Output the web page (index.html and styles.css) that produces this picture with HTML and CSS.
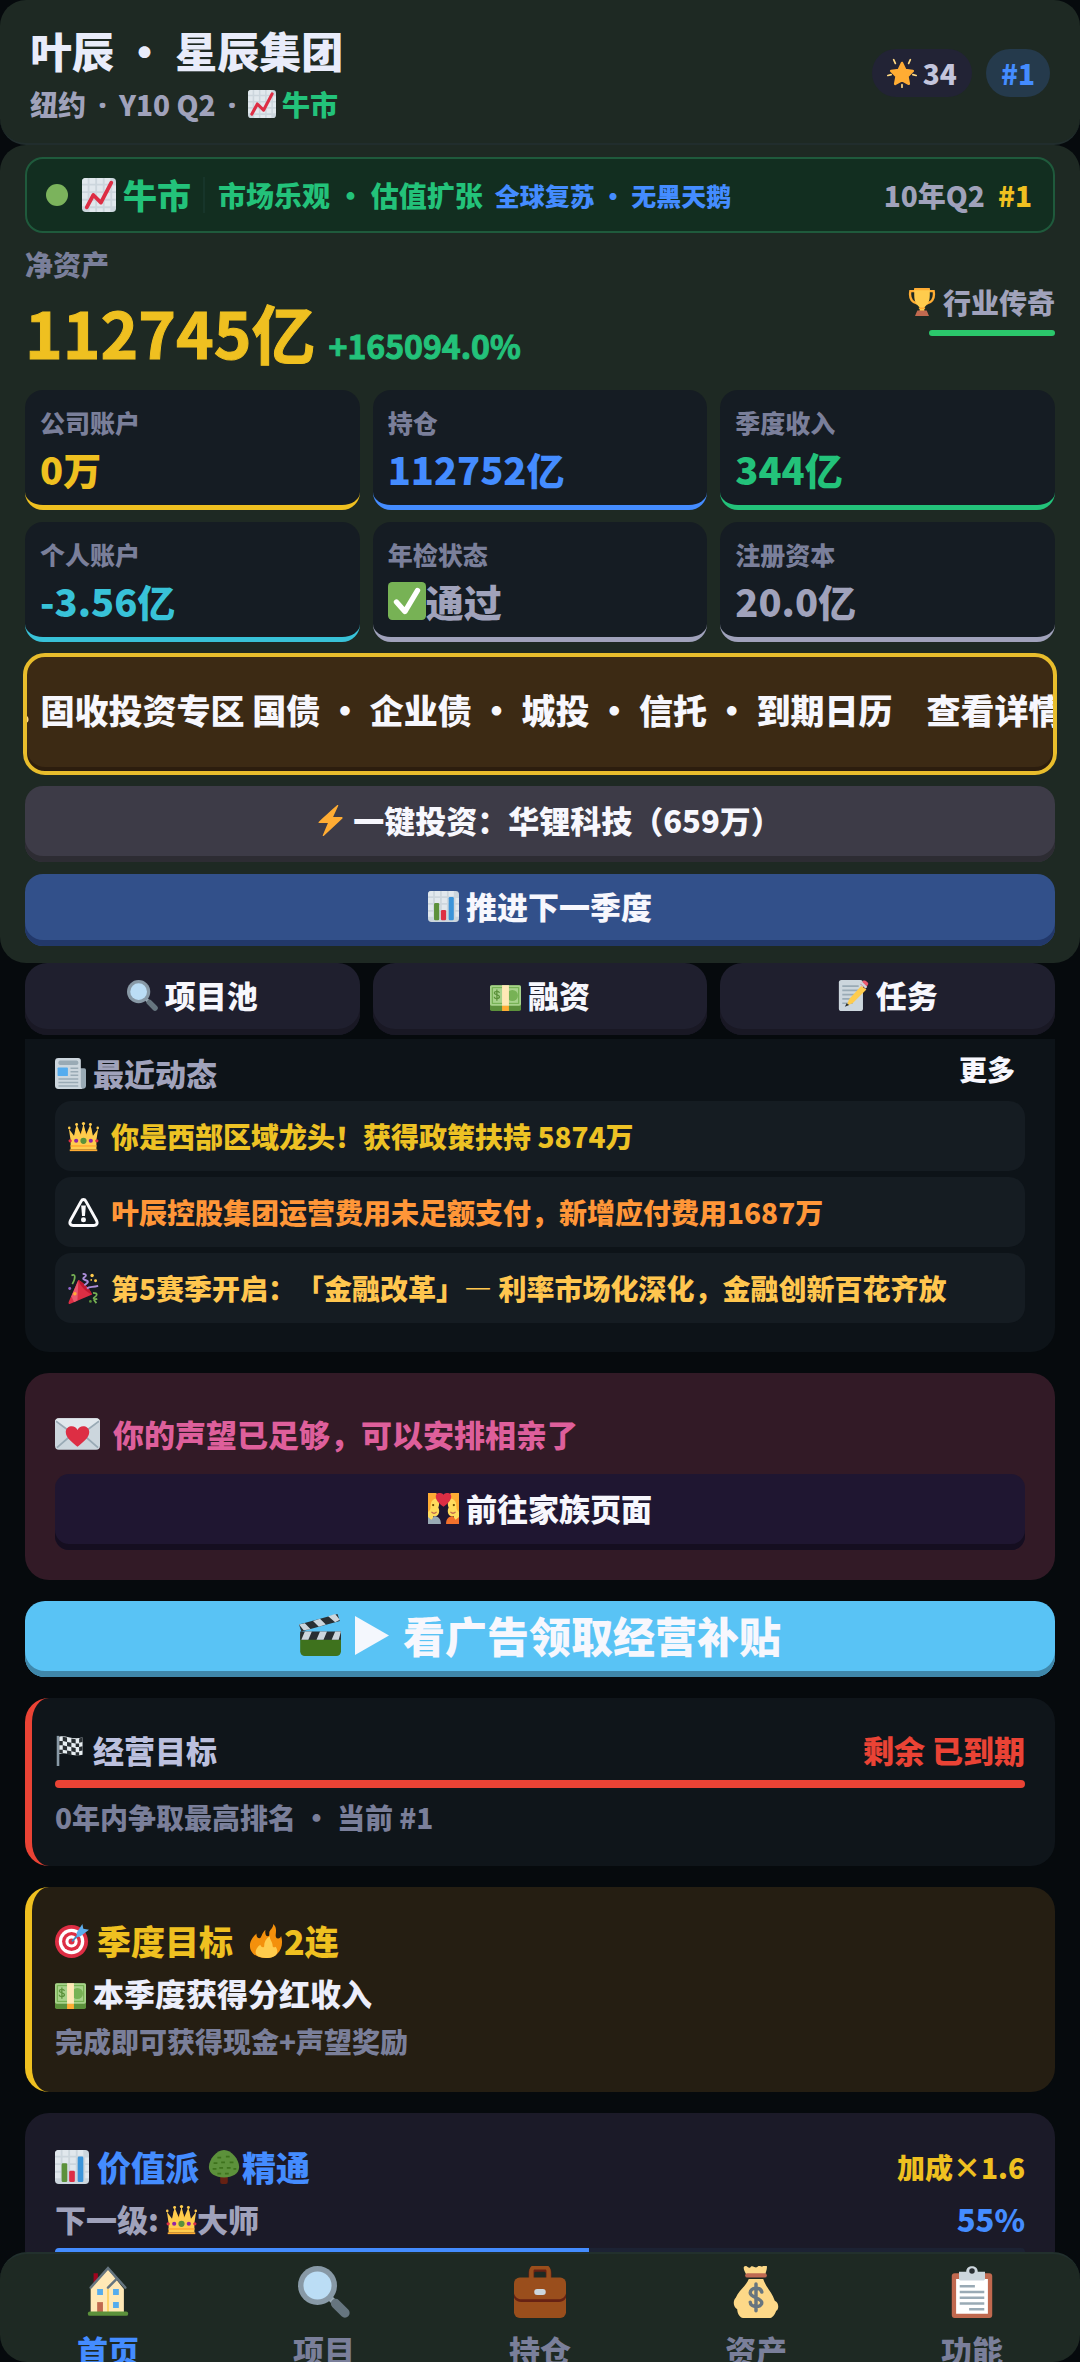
FILE: index.html
```html
<!DOCTYPE html>
<html lang="zh-CN">
<head>
<meta charset="utf-8">
<meta name="viewport" content="width=device-width, initial-scale=1">
<title>叶辰 • 星辰集团</title>
<link rel="stylesheet" href="styles.css">
</head>
<body>
<svg class="sprite" aria-hidden="true">
  <symbol id="i-rise" viewBox="0 0 36 36">
    <rect width="36" height="36" rx="4" fill="#ccd6dd"/>
    <g fill="#e1e8ed"><path d="M0 4a4 4 0 0 1 4-4h2v6H0zM8 0h6v6H8zM16 0h6v6h-6zM24 0h6v6h-6zM0 8h6v6H0zM8 8h6v6H8zM16 8h6v6h-6zM24 8h6v6h-6zM32 8h4v6h-4zM0 16h6v6H0zM8 16h6v6H8zM16 16h6v6h-6zM24 16h6v6h-6zM32 16h4v6h-4zM0 24h6v6H0zM8 24h6v6H8zM16 24h6v6h-6zM24 24h6v6h-6zM32 24h4v6h-4zM8 32h6v4H8zM16 32h6v4h-6zM24 32h6v4h-6z"/></g>
    <path d="M5 31l7-13 8 8L31 5" fill="none" stroke="#dd2e44" stroke-width="4" stroke-linecap="round" stroke-linejoin="round"/>
  </symbol>
  <symbol id="i-bars" viewBox="0 0 36 36">
    <rect width="36" height="36" rx="4" fill="#ccd6dd"/>
    <path fill="#e1e8ed" d="M0 4a4 4 0 0 1 4-4h2v6H0zM8 0h6v6H8zM16 0h6v6h-6zM24 0h6v6h-6zM0 8h6v6H0zM8 8h6v6H8zM16 8h6v6h-6zM24 8h6v6h-6zM32 8h4v6h-4zM0 16h6v6H0zM8 16h6v6H8zM16 16h6v6h-6zM32 16h4v6h-4zM0 24h6v6H0zM32 24h4v6h-4z"/>
    <rect x="7" y="14" width="6" height="20" rx="1.5" fill="#5c913b"/>
    <rect x="15" y="22" width="6" height="12" rx="1.5" fill="#dd2e44"/>
    <rect x="24" y="7" width="6" height="27" rx="1.5" fill="#3b94d9"/>
  </symbol>
  <symbol id="i-star" viewBox="0 0 36 36">
    <path fill="#ffac33" stroke="#ffac33" stroke-width="3" stroke-linejoin="round" d="M18 6l4 8.500 9 1-6.500 6.500 1.700 9L18 26.500 9.800 31l1.700-9L5 15.500l9-1z"/>
    <path d="M8 2l2 4.500M28 2l-2 4.500M1 21l4-1M35 21l-4-1M18 32v3" stroke="#ffd983" stroke-width="2" stroke-linecap="round"/>
  </symbol>
  <symbol id="i-trophy" viewBox="0 0 36 36">
    <path fill="none" stroke="#ffac33" stroke-width="3" d="M9 4H3c-1 6 0 14 9 16M27 4h6c1 6 0 14-9 16"/>
    <path fill="#ffcc4d" d="M8 1h20v8c0 10-4 13-7 16v5h-6v-5C12 22 8 19 8 9z"/>
    <path fill="#ffac33" d="M8 0h20v3H8zM14 25h8v2h-8z"/>
    <path fill="#c1694f" d="M12 29h12l3 7H9z"/>
  </symbol>
  <symbol id="i-check" viewBox="0 0 36 36">
    <rect width="36" height="36" rx="4" fill="#77b255"/>
    <path d="M8 19l8 9L28 8" fill="none" stroke="#fff" stroke-width="5" stroke-linecap="round" stroke-linejoin="round"/>
  </symbol>
  <symbol id="i-bag" viewBox="0 0 36 36">
    <path fill="#fdd888" d="M13 9h10c2 6 6 9 8 15 3 1 3 6 1 7-1 3-3 5-4 5H9c-2 0-4-3-4-6-3-2-3-6-1-8 2-5 7-8 9-13z"/>
    <path fill="#fdd888" d="M12 7c-2-3-4-7-1-7 1 0 2 2 3 1 1-2 3 0 4 0s2-2 3-1 2 0 3-1c3 0 1 5 0 8z"/>
    <path fill="#bf6952" d="M12 5h12a1.500 1.500 0 0 1 0 3H12a1.500 1.500 0 0 1 0-3z"/>
    <path fill="none" stroke="#67757f" stroke-width="2.400" stroke-linecap="round" d="M22 18c-1-4-8-3-8 .5s8 3.500 8 7-8 3.500-8-.5M18 12.500v18.500"/>
  </symbol>
  <symbol id="i-bolt" viewBox="0 0 36 36">
    <path fill="#ffac33" d="M32 15c0-.4-.3-1-1-1H21L27 1c.3-1-.6-1.400-1.400-.7C18 7 10 14 4.500 19.400c-.8.800-.5 1.600.5 1.600h10L9 35c-.3.900.6 1.300 1.400.7L31.500 16c.3-.3.500-.6.500-1z"/>
  </symbol>
  <symbol id="i-lens" viewBox="0 0 36 36">
    <path d="M22 22l4 4" stroke="#9aaab4" stroke-width="4"/>
    <path d="M26 26l6.500 6.500" stroke="#66757f" stroke-width="6.500" stroke-linecap="round"/>
    <circle cx="13.500" cy="13.500" r="13.500" fill="#8899a6"/>
    <circle cx="13.500" cy="13.500" r="9.700" fill="#bbddf5"/>
  </symbol>
  <symbol id="i-cash" viewBox="0 0 36 36">
    <rect y="6" width="36" height="30" rx="2" fill="#5c913b"/>
    <rect y="6" width="36" height="24" rx="2" fill="#a7d28b"/>
    <rect x="2" y="8" width="32" height="20" rx="1" fill="#77b255"/>
    <rect x="3.500" y="9.500" width="29" height="17" fill="#a7d28b"/>
    <circle cx="26" cy="18" r="6.500" fill="#77b255"/>
    <path d="M11 15c-1-3-6-2-6 0s6 2 6 4.500-6 3-6 0M8 11v13" fill="none" stroke="#5c913b" stroke-width="1.500"/>
    <path fill="#ffe8b6" d="M14 6h8v24h-8z"/><path fill="#ffac33" d="M14 30h8v6h-8z"/>
  </symbol>
  <symbol id="i-memo" viewBox="0 0 36 36">
    <rect x="1" y="0" width="28" height="36" rx="3" fill="#ccd6dd"/>
    <path d="M5 7h19M5 12h19M5 17h16M5 22h14M5 27h12" stroke="#99aab5" stroke-width="2"/>
    <path fill="#ffcc4d" d="M27 7l6 4-16 16-7 3 3-8z"/>
    <path fill="#ea596e" d="M29 1c2-2 7 2 6 4l-3 5-6-5z"/>
    <path fill="#ccd6dd" d="M26 4l2-2 6 6-2 2z"/><path fill="#292f33" d="M10 27l3 2-5 2z"/>
  </symbol>
  <symbol id="i-news" viewBox="0 0 36 36">
    <path fill="#99aab5" d="M28 12h6a2 2 0 0 1 2 2v18c0 5-7 5-8 0z"/>
    <path fill="#ccd6dd" d="M4 0h23a3 3 0 0 1 3 3v29c0 2 1 4 3 4H4a4 4 0 0 1-4-4V4a4 4 0 0 1 4-4z"/>
    <rect x="4" y="3" width="23" height="5" rx="2" fill="#99aab5"/>
    <rect x="3" y="11" width="12" height="10" rx="1" fill="#55acee"/>
    <path d="M18 12h9M18 16h9M18 20h9M4 24.500h23M4 28.500h23M4 32.500h23" stroke="#99aab5" stroke-width="1.800"/>
  </symbol>
  <symbol id="i-crown" viewBox="0 0 36 36">
    <path fill="#f4900c" d="M7 25L9 8l5 8 4-10 4 10 5-8 2 17z"/>
    <path fill="#ffcc4d" d="M3 22L1 9l6 8 3-13 5 12 3-13 3 13 5-12 3 13 6-8-2 13v11H3z"/>
    <g fill="#ffcc4d"><circle cx="1.500" cy="8" r="1.500"/><circle cx="10" cy="4" r="1.700"/><circle cx="18" cy="3" r="1.900"/><circle cx="26" cy="4" r="1.700"/><circle cx="34.500" cy="8" r="1.500"/></g>
    <path d="M3 28h30v2H3z" fill="#ffac33"/><path d="M2 33h32v2H2z" fill="#ffac33"/>
    <circle cx="18" cy="23" r="3.600" fill="#5c913b"/><circle cx="9.500" cy="23" r="2.400" fill="#9224a5"/><circle cx="26.500" cy="23" r="2.400" fill="#9224a5"/><circle cx="2.500" cy="23" r="1.900" fill="#dd2e44"/><circle cx="33.500" cy="23" r="1.900" fill="#dd2e44"/>
  </symbol>
  <symbol id="i-warn" viewBox="0 0 36 36">
    <path fill="none" stroke="#fafafc" stroke-width="3.400" stroke-linejoin="round" d="M15.500 4.500c1-2 4-2 5 0L33 27c2 4 0 6-3 6H6c-3 0-5-2-3-6z"/>
    <path fill="#fafafc" d="M15.300 10h5.400l-1 12h-3.400z"/><circle cx="18" cy="26.500" r="2.900" fill="#fafafc"/>
  </symbol>
  <symbol id="i-party" viewBox="0 0 36 36">
    <path fill="#dd2e44" d="M12 8c4 1 14 11 16 17L2 36c-1 0-2-1-1-3z"/>
    <path fill="#ea596e" d="M12 8L4 27l3 7 4-2z"/>
    <path fill="#be1931" d="M12 8c6 3 13 9 16 17-7-3-14-10-16-17z"/>
    <circle cx="8" cy="24" r="2" fill="#ffac33"/>
    <path fill="none" stroke="#77b255" stroke-width="2" d="M4 3c5-3 5 3 1 10M29 23c6 0 5 3 2 5s0 3 3 2M30 31l3 4"/>
    <path fill="none" stroke="#aa8dd8" stroke-width="2.200" d="M17 1c4 0 5 2 2 4s0 3 3 4-1 4-3 5M22 18c3-3 6-1 13-3"/>
    <g fill="#ffcc4d"><circle cx="28" cy="3" r="2"/><circle cx="32" cy="9" r="1.700"/><circle cx="27" cy="8" r="1"/></g>
    <circle cx="2" cy="18" r="1.700" fill="#9266cc"/><circle cx="26" cy="33" r="1.600" fill="#5c913b"/>
  </symbol>
  <symbol id="i-letter" viewBox="0 0 46 32">
    <rect width="46" height="32" rx="4" fill="#ccd6dd"/>
    <path fill="#e1e8ed" d="M0 4a4 4 0 0 1 4-4h38a4 4 0 0 1 4 4L25 17h-4z"/>
    <path fill="none" stroke="#99aab5" stroke-width="1.800" d="M2 30l16-14M44 30L28 16M1 3l19 14h6L45 3"/>
    <path fill="#dd2e44" d="M23 12c2-6 12-5 12 2 0 6-7 11-12 15-5-4-12-9-12-15 0-7 10-8 12-2z"/>
  </symbol>
  <symbol id="i-couple" viewBox="0 0 36 36">
    <path fill="#ffdc5d" d="M0 4h8c5 3 6 8 4 13 2 3 1 9-3 10H6v5H0zM36 4h-8c-5 3-6 8-4 13-2 3-1 9 3 10h3v5h6z"/>
    <path fill="#ffac33" d="M0 0h9c4 2 5 5 4 7-5-1-10 0-10 9 0 3-1 5-3 6zM36 0h-9c-4 2-5 5-4 7 5-1 10 0 10 9 0 3 1 5 3 6z"/>
    <path fill="#99aab5" d="M0 28l4 3 3-4c5 0 8 3 8 9H0z"/><path fill="#f4712c" d="M36 28l-4 3-3-4c-5 0-8 3-8 9h15z"/>
    <circle cx="6" cy="14" r="1.300" fill="#664500"/><circle cx="30" cy="14" r="1.300" fill="#664500"/>
    <path d="M4 22c2 2 4 2 6 0M32 22c-2 2-4 2-6 0" stroke="#c1694f" stroke-width="1.400" fill="none"/>
    <path fill="#dd2e44" d="M18 2c2-3 9-3 9 2s-5 9-9 12c-4-3-9-7-9-12s7-5 9-2z"/>
  </symbol>
  <symbol id="i-clapper" viewBox="0 0 36 36">
    <path fill="#3e721d" d="M1 17h35v15a4 4 0 0 1-4 4H5a4 4 0 0 1-4-4z"/>
    <path fill="#292f33" d="M1 15h35v7H1zM0 9l33-9 2 6L2 15z"/>
    <path fill="#ccd6dd" d="M5 15h6l-3 7H2zM18 15h6l-3 7h-6zM31 15h5l-2 7h-6zM0 9l5-1 5 5-6 1zM12 6l6-2 5 5-6 2zM25 2l6-2 4 5-4 2z"/>
  </symbol>
  <symbol id="i-play" viewBox="0 0 34 42"><path fill="#f4f7fd" d="M0 2v39l34-19.500z"/></symbol>
  <symbol id="i-flag" viewBox="0 0 36 36">
    <path fill="#8899a6" d="M2 1h3v35H2z"/>
    <path fill="#e8eef2" d="M5 2c8-2 14 4 27 1v20c-13 3-19-4-27-1z"/>
    <path fill="#292f33" d="M9 2l5 1v5l-5-1zM19 4l5 1v5l-5-1zM28 4l4-1v5l-4 1zM5 7h4v5H5zM14 8l5 1v5l-5-1zM24 10h4v4h-4zM9 12l5 1v5l-5-1zM19 14l5 1v5l-5-1zM28 14l4-1v5l-4 1zM5 17h4v4H5zM14 18l5 1v5l-5-2zM24 20h4v4h-4z"/>
  </symbol>
  <symbol id="i-target" viewBox="0 0 36 36">
    <circle cx="17.500" cy="18.500" r="17.500" fill="#dd2e44"/><circle cx="17.500" cy="18.500" r="13.500" fill="#fff"/><circle cx="17.500" cy="18.500" r="10" fill="#dd2e44"/><circle cx="17.500" cy="18.500" r="6.500" fill="#fff"/><circle cx="17.500" cy="18.500" r="3.200" fill="#dd2e44"/>
    <path d="M18 18.500L28 8" stroke="#3b88c3" stroke-width="2"/><path fill="#5dadec" d="M23 9l6-9 1 5 6 1-9 7-4 1z"/>
  </symbol>
  <symbol id="i-fire" viewBox="0 0 36 36">
    <path fill="#f4900c" d="M35 19c0-2-.3-4.300-1-6.300-.5 1.500-1.600 2.600-3.200 2.600-3.300 0-2.500-3.600-2.300-6 .2-3.200.4-6.800-3-9.300.6 4.500-3.700 6-4 9-.2 2 .5 4-1.500 4-3 0-3-4-2.600-7C13 10 13.500 15 11 15c-2 0-3.500-2-3-5-3 3-7 7-7 13 0 8 7 13 17 13s17-7 17-17z"/>
    <path fill="#ffcc4d" d="M28 24c-1 1-3 1-3-1 0-4-3-6-3-10-4 2-6 6-6 11-1 1-3 1-4-2-3 2-5 5-5 8 0 4 5 6 11 6s12-2 12-7c0-2-1-4-2-5z"/>
  </symbol>
  <symbol id="i-tree" viewBox="0 0 36 36">
    <path fill="#662113" d="M14 26h8v8a2 2 0 0 1-2 2h-4a2 2 0 0 1-2-2z"/>
    <path fill="#5c913b" d="M18 0c8 0 16 10 16 18 0 7-7 11-16 11S2 25 2 18C2 10 10 0 18 0z"/>
    <path d="M11 8h4M20 7h4M7 14h4M15 13h4M24 13h4M6 20h4M13 19h4M21 19h4M28 20h3M11 25h4M19 25h4" stroke="#3e721d" stroke-width="1.800"/>
  </symbol>
  <symbol id="i-home" viewBox="0 0 36 36">
    <path fill="#a0041e" d="M8 5h3v8H8z"/>
    <path fill="#ffe8b6" d="M6 15L18 2l11 14v16H6z"/><path fill="#ffcc4d" d="M17.500 16h1v16h-1z"/>
    <path fill="none" stroke="#66757f" stroke-width="1.700" stroke-linecap="round" d="M6 15L18 1.500l12 13.500M18 15l5.500-5.500"/>
    <path fill="#55acee" d="M10.500 16h4v4h-4zM21.500 16h4v4h-4zM21.500 25h4v4h-4z"/><path fill="#c1694f" d="M10.500 25h4v7h-4z"/>
    <rect x="4" y="31.500" width="28" height="3" rx="1.500" fill="#5c913b"/>
  </symbol>
  <symbol id="i-case" viewBox="0 0 36 36">
    <path fill="none" stroke="#662113" stroke-width="4" d="M12 9V5c0-2 1-3 3-3h6c2 0 3 1 3 3v4"/>
    <path fill="none" stroke="#9a4e1c" stroke-width="3" d="M12 9V4c0-2 1-3 2-3h8c1 0 2 1 2 3v5"/>
    <rect y="8" width="36" height="28" rx="4" fill="#9a4e1c"/>
    <path fill="#662113" d="M0 19c1 3 3 4 5 4h26c2 0 4-1 5-4v3c-1 2-3 3-5 3H5c-2 0-4-1-5-3z"/>
    <rect x="14" y="16" width="8" height="4" rx="2" fill="#ccd6dd"/>
  </symbol>
  <symbol id="i-clip" viewBox="0 0 36 36">
    <rect x="4" y="5" width="28" height="31" rx="2" fill="#c1694f"/><path fill="#fff" d="M7 9h22v24H7z"/>
    <path fill="#ccd6dd" d="M9 4h5c0-5 8-5 8 0h5v5a1 1 0 0 1-1 1H10a1 1 0 0 1-1-1z"/><circle cx="18" cy="3.500" r="1.900" fill="#292f33"/>
    <path d="M9.500 14H20M9.500 18h17M9.500 22h17M9.500 26h17M16 30h10.500" stroke="#99aab5" stroke-width="1.700"/>
  </symbol>
</svg>

<div class="app">
  <header class="top">
    <div>
      <h1>叶辰 • 星辰集团</h1>
      <p class="where">纽约 <span class="sep">·</span> Y10 Q2 <span class="sep">·</span><span class="mood"><svg class="icon"><use href="#i-rise"/></svg>牛市</span></p>
    </div>
    <div class="badges">
      <span class="badge"><svg class="icon"><use href="#i-star"/></svg>34</span>
      <span class="badge badge-rank">#1</span>
    </div>
  </header>

  <section class="panel">
    <div class="market">
      <span class="dot"></span>
      <strong class="phase"><svg class="icon"><use href="#i-rise"/></svg>牛市</strong>
      <span class="outlook">市场乐观 • 估值扩张</span>
      <span class="events">全球复苏 • 无黑天鹅</span>
      <span class="quarter">10年Q2</span>
      <span class="gold">#1</span>
    </div>

    <div class="worth">
      <div>
        <h2 class="worth-label">净资产</h2>
        <p class="worth-value">112745亿<span class="growth">+165094.0%</span></p>
      </div>
      <div class="title-box">
        <span class="row"><svg class="icon"><use href="#i-trophy"/></svg>行业传奇</span>
        <span class="title-bar"></span>
      </div>
    </div>

    <dl class="stats">
      <div class="stat c-gold"><dt>公司账户</dt><dd>0万</dd></div>
      <div class="stat c-blue"><dt>持仓</dt><dd>112752亿</dd></div>
      <div class="stat c-green"><dt>季度收入</dt><dd>344亿</dd></div>
      <div class="stat c-cyan"><dt>个人账户</dt><dd>-3.56亿</dd></div>
      <div class="stat c-grey"><dt>年检状态</dt><dd><svg class="icon"><use href="#i-check"/></svg>通过</dd></div>
      <div class="stat c-grey"><dt>注册资本</dt><dd>20.0亿</dd></div>
    </dl>

    <button class="bond" type="button"><span class="bond-text"><svg class="icon"><use href="#i-bag"/></svg><span>固收投资专区 国债 • 企业债 • 城投 • 信托 • 到期日历</span><span>查看详情</span></span></button>
    <button class="btn btn-quick" type="button"><svg class="icon"><use href="#i-bolt"/></svg>一键投资：华锂科技（659万）</button>
    <button class="btn btn-next" type="button"><svg class="icon"><use href="#i-bars"/></svg>推进下一季度</button>
  </section>

  <main class="feed">
    <div class="tabs">
      <button class="btn btn-tab" type="button"><svg class="icon"><use href="#i-lens"/></svg>项目池</button>
      <button class="btn btn-tab" type="button"><svg class="icon"><use href="#i-cash"/></svg>融资</button>
      <button class="btn btn-tab" type="button"><svg class="icon"><use href="#i-memo"/></svg>任务</button>
    </div>

    <section class="card news">
      <div class="split news-head">
        <h2 class="row muted"><svg class="icon"><use href="#i-news"/></svg>最近动态</h2>
        <button class="more" type="button">更多</button>
      </div>
      <ul>
        <li class="t-gold"><svg class="icon"><use href="#i-crown"/></svg>你是西部区域龙头！获得政策扶持 5874万</li>
        <li class="t-orange"><svg class="icon"><use href="#i-warn"/></svg>叶辰控股集团运营费用未足额支付，新增应付费用1687万</li>
        <li class="t-amber"><svg class="icon"><use href="#i-party"/></svg>第5赛季开启：「金融改革」— 利率市场化深化，金融创新百花齐放</li>
      </ul>
    </section>

    <section class="card match">
      <p class="match-text"><svg class="letter"><use href="#i-letter"/></svg>你的声望已足够，可以安排相亲了</p>
      <button class="btn btn-family" type="button"><svg class="icon"><use href="#i-couple"/></svg>前往家族页面</button>
    </section>

    <button class="btn btn-ad" type="button"><svg class="icon"><use href="#i-clapper"/></svg><svg class="play"><use href="#i-play"/></svg>看广告领取经营补贴</button>

    <section class="card goal">
      <div class="split line">
        <h2 class="row soft"><svg class="icon"><use href="#i-flag"/></svg>经营目标</h2>
        <span>剩余 已到期</span>
      </div>
      <div class="bar bar-red"></div>
      <p class="note">0年内争取最高排名 • 当前 #1</p>
    </section>

    <section class="card quest">
      <h2 class="row head gold"><svg class="icon"><use href="#i-target"/></svg>季度目标<span class="streak"><svg class="icon"><use href="#i-fire"/></svg>2连</span></h2>
      <p class="row line bright"><svg class="icon"><use href="#i-cash"/></svg>本季度获得分红收入</p>
      <p class="note">完成即可获得现金+声望奖励</p>
    </section>

    <section class="card school">
      <div class="split head">
        <h2 class="row blue"><svg class="icon"><use href="#i-bars"/></svg>价值派<span class="rank"><svg class="icon"><use href="#i-tree"/></svg>精通</span></h2>
        <span class="bonus">加成×1.6</span>
      </div>
      <div class="split line">
        <span class="row muted next">下一级: <span class="tight"><svg class="icon"><use href="#i-crown"/></svg>大师</span></span>
        <span class="blue">55%</span>
      </div>
      <div class="bar"><div class="bar-fill" style="width:55%"></div></div>
    </section>
  </main>

  <nav class="nav">
    <a class="on" href="#home"><svg class="icon"><use href="#i-home"/></svg>首页</a>
    <a href="#projects"><svg class="icon"><use href="#i-lens"/></svg>项目</a>
    <a href="#holdings"><svg class="icon"><use href="#i-case"/></svg>持仓</a>
    <a href="#assets"><svg class="icon"><use href="#i-bag"/></svg>资产</a>
    <a href="#more"><svg class="icon"><use href="#i-clip"/></svg>功能</a>
  </nav>
</div>
</body>
</html>
```
FILE: styles.css
```css
:root {
  --gold: #efc020;
  --blue: #448cff;
  --green: #23c27a;
  --cyan: #38c2d8;
  --grey: #a0a2bb;
  --dim: #7a7f9a;
  --white: #f7f7fd;
  --red: #ea4335;
}
* { box-sizing: border-box; margin: 0; padding: 0; }
body {
  background: #000;
  color: var(--white);
  font: 900 28px/36px "Noto Sans CJK SC", "Noto Sans", sans-serif;
  text-spacing-trim: space-all;
}
h1, h2 { font: inherit; }
strong { font-weight: inherit; }
ul { list-style: none; }
a { color: inherit; text-decoration: none; }
button { border: 0; font: inherit; color: inherit; cursor: pointer; }
.sprite { position: absolute; width: 0; height: 0; }
.icon { width: 1em; height: 1em; flex: none; }

.app { height: 100vh; display: flex; flex-direction: column; background: #060a0d; }
.row { display: flex; align-items: center; gap: 7px; white-space: pre; }
.split { display: flex; align-items: center; justify-content: space-between; }
.tight { display: inline-flex; align-items: center; }
.gold { color: var(--gold); }
.blue { color: var(--blue); }
.muted { color: var(--grey); }
.soft { color: #bcc0de; }
.bright { color: #eceefb; }

/* header */
.top {
  flex: none;
  display: flex; align-items: center; justify-content: space-between;
  padding: 22px 30px 19px;
  border-bottom: 2px solid #212d2d;
  border-radius: 26px;
  background: #1e2923;
}
.top h1 { font-size: 42px; line-height: 56px; color: #e9ecfa; }
.where { display: flex; margin-top: 6px; line-height: 40px; color: var(--grey); white-space: pre; }
.sep { padding: 0 6px; font-family: "Noto Sans", sans-serif; }
.mood { display: flex; align-items: center; gap: 6px; margin-left: 6px; color: var(--green); }
.badges { display: flex; gap: 14px; }
.badge {
  display: flex; align-items: center; gap: 6px;
  padding: 0 15px; line-height: 48px;
  border-radius: 24px;
  background: #222335; color: #c3c5dc;
}
.badge .icon { width: 30px; height: 30px; }
.badge-rank { background: #253a4c; color: var(--blue); }

/* summary panel */
.panel { flex: none; padding: 12px 25px 17px; border-radius: 26px; background: #1e2923; }
.market {
  display: flex; align-items: center;
  height: 76px; padding: 0 21px 0 19px;
  border: 2px solid #1f5a3c; border-radius: 18px;
  background: #122e20;
  white-space: pre;
}
.dot { width: 22px; height: 22px; border-radius: 50%; background: #7bb35c; }
.phase { display: flex; align-items: center; gap: 7px; margin-left: 14px; font-size: 34px; color: var(--green); }
.outlook { margin-left: 12px; padding-left: 13px; border-left: 2px solid #17352a; color: var(--green); }
.events { margin-left: 12px; font-size: 25px; color: var(--blue); }
.quarter { margin-left: auto; margin-right: 13px; color: var(--grey); }

.worth { display: flex; align-items: center; justify-content: space-between; margin-top: 13px; }
.worth-label { color: var(--dim); }
.worth-value {
  display: flex; align-items: baseline; gap: 13px;
  height: 84px; margin-top: 7px;
  font-size: 64px; font-weight: 700; line-height: 84px; color: var(--gold); white-space: nowrap;
  -webkit-text-stroke: 1px;
}
.growth { font-size: 32px; line-height: 40px; color: var(--green); }
.title-box { display: flex; flex-direction: column; align-items: flex-end; gap: 10px; color: var(--grey); }
.title-bar { width: 126px; height: 6px; border-radius: 3px; background: #2bc76b; }

.stats { display: grid; grid-template-columns: repeat(3, 1fr); gap: 12px 13px; margin-top: 17px; }
.stat {
  height: 120px; padding: 16px 15px 0;
  border-bottom: 5px solid; border-radius: 18px;
  background: #151c23;
}
.stat dt { font-size: 25px; line-height: 32px; color: var(--dim); }
.stat dd { display: flex; align-items: center; margin-top: 7px; font-size: 38px; line-height: 48px; }
.c-gold { color: var(--gold); }
.c-blue { color: var(--blue); }
.c-green { color: var(--green); }
.c-cyan { color: var(--cyan); }
.c-grey { color: var(--grey); }

.bond {
  display: flex; align-items: center; justify-content: center;
  width: calc(100% + 4px); height: 122px; margin: 11px -2px;
  padding-bottom: 8px;
  border: 4px solid #e8bd2c; border-radius: 22px;
  background: #3c2a14; box-shadow: inset 0 -4px #2c1d0e;
  font-size: 34px; overflow: hidden;
}
.bond-text { display: flex; align-items: center; gap: 9px; padding-right: 20px; white-space: pre; }
.bond-text span + span { margin-left: 25px; }

.btn {
  display: flex; align-items: center; justify-content: center; gap: 7px;
  width: 100%; height: 76px; padding-bottom: 8px;
  border-radius: 18px;
  font-size: 31px; white-space: nowrap;
}
.btn-quick { padding-left: 17px; background: #3d3b47; box-shadow: inset 0 -6px #2d2c33; }
.btn-next { height: 72px; margin-top: 12px; background: #32508a; box-shadow: inset 0 -6px #22386a; }

/* scrolling feed */
.feed { flex: 1; min-height: 0; overflow: auto; scrollbar-width: none; padding: 0 25px; }
.tabs { display: grid; grid-template-columns: repeat(3, 1fr); gap: 13px; }
.btn-tab { height: 72px; border-radius: 22px; background: #1f1f2e; box-shadow: inset 0 -6px #191824; }
.card { margin-bottom: 21px; padding: 30px; border-radius: 24px; background: #0f151a; }
.line { min-height: 44px; font-size: 31px; }
.head { min-height: 48px; font-size: 34px; gap: 8px; }
.note { line-height: 42px; color: var(--dim); }

.news { margin-top: 4px; padding-top: 14px; padding-bottom: 29px; border-radius: 0 0 24px 24px; background: #0d1318; }
.news-head { margin-bottom: 8px; height: 40px; font-size: 31px; }
.more { padding: 0 10px 8px; background: none; font-size: 28px; }
.news ul { display: grid; gap: 6px; }
.news li {
  display: flex; align-items: center; gap: 12px;
  height: 70px; padding: 0 13px;
  border-radius: 16px; background: #151c22;
  white-space: nowrap;
}
.news li .icon { width: 31px; height: 31px; }
.t-gold { color: #edc224; }
.t-orange { color: #ff9638; }
.t-amber { color: #ffc64f; }

.match { background: #321a26; }
.match-text { display: flex; align-items: center; gap: 13px; height: 62px; margin-bottom: 9px; font-size: 31px; color: #de5f9b; }
.letter { width: 45px; height: 32px; flex: none; }
.btn-family { border-radius: 14px; background: #1f1631; box-shadow: inset 0 -6px #150e20; }
.btn-ad { margin-bottom: 21px; border-radius: 20px; background: #59c3f5; box-shadow: inset 0 -6px #3f87aa; font-size: 42px; gap: 14px; }
.play { width: 34px; height: 42px; flex: none; }

.goal { border-left: 7px solid var(--red); padding-left: 23px; padding-bottom: 28px; color: var(--red); }
.bar { height: 8px; margin: 8px 0; border-radius: 4px; background: #1c2233; overflow: hidden; }
.bar-red { background: var(--red); }
.bar-fill { height: 100%; background: var(--blue); }

.quest { border-left: 7px solid var(--gold); padding-left: 23px; background: #251e12; }
.quest .line { margin: 6px 0; }
.quest .note { line-height: 41px; }
.streak { display: flex; align-items: center; gap: 1px; margin-left: 8px; }

.school { background: #1b1a28; }
.school .head .row { gap: 8px; }
.school .line { margin-top: 6px; }
.school .next { gap: 0; }
.school .bar { margin-top: 7px; }
.rank { display: flex; align-items: center; gap: 1px; }
.bonus { font-size: 28px; color: var(--gold); }

/* bottom navigation */
.nav {
  flex: none; height: 110px; padding-top: 12px;
  display: grid; grid-template-columns: repeat(5, 1fr);
  border-top: 2px solid #22302d; border-radius: 27px;
  background: #1e2923; color: var(--dim);
  font-size: 31px; line-height: 40px;
  overflow: hidden;
}
.nav a { display: flex; flex-direction: column; align-items: center; gap: 12px; }
.nav .icon { width: 52px; height: 52px; }
.nav .on { color: var(--blue); }
```
